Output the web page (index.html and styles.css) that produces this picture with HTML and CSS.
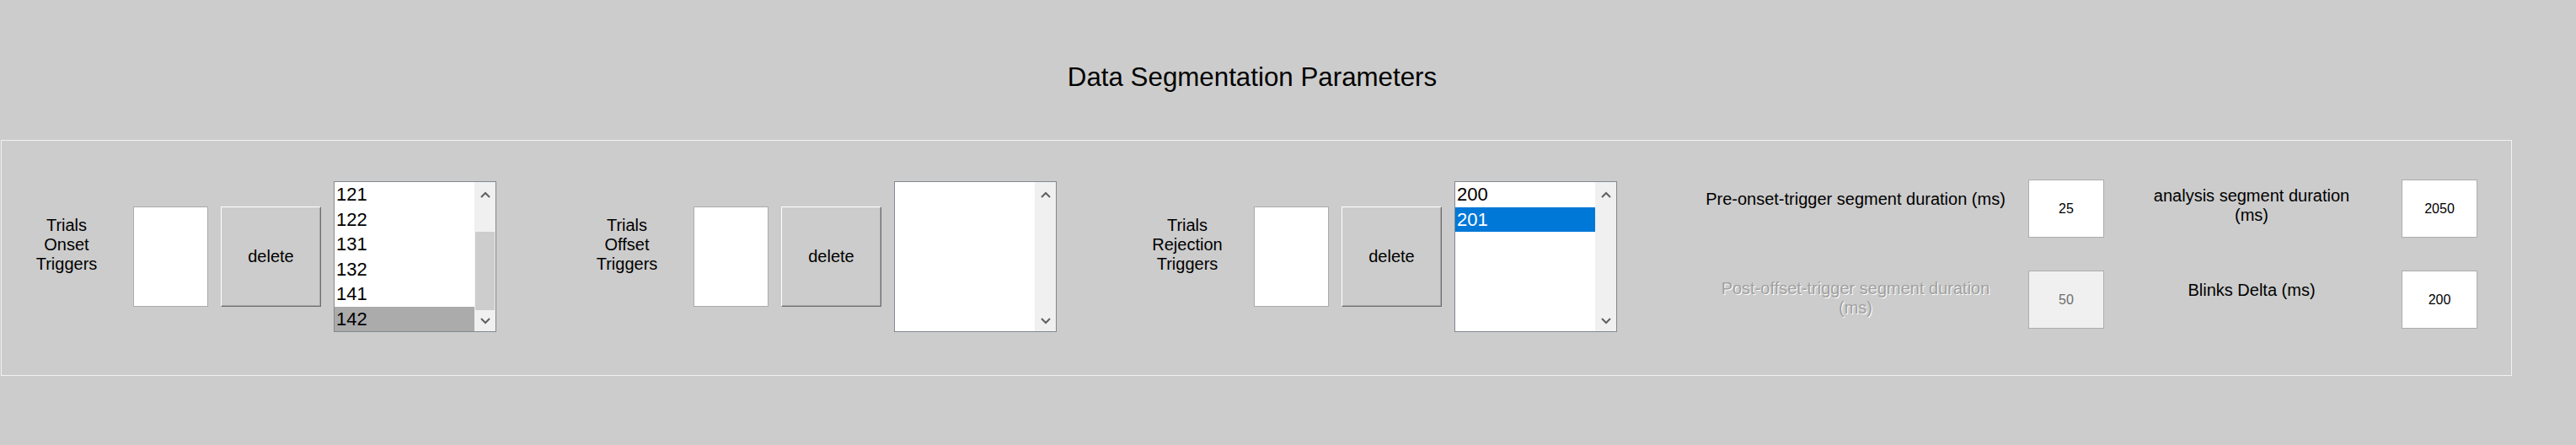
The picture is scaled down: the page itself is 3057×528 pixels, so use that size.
FILE: index.html
```html
<!DOCTYPE html>
<html>
<head>
<meta charset="utf-8">
<title>Data Segmentation Parameters</title>
<link rel="stylesheet" href="styles.css">
</head>
<body>
<div class="window">
  <header class="header">
    <h1 class="title">Data Segmentation Parameters</h1>
  </header>
  <section class="panel">
    <div class="groups">
      <div class="group">
        <div class="group-label">Trials<br>Onset<br>Triggers</div>
        <div class="edit"></div>
        <button class="btn">delete</button>
        <div class="listbox">
          <div class="items">
            <div class="item">121</div>
            <div class="item">122</div>
            <div class="item">131</div>
            <div class="item">132</div>
            <div class="item">141</div>
            <div class="item item-inactive">142</div>
          </div>
          <div class="scrollbar">
            <div class="sb-btn sb-up"><svg width="12" height="8" viewBox="0 0 12 8"><polyline points="1,7 6,2 11,7" fill="none" stroke="#606060" stroke-width="2"/></svg></div>
            <div class="sb-track"><div class="sb-thumb"></div></div>
            <div class="sb-btn sb-down"><svg width="12" height="8" viewBox="0 0 12 8"><polyline points="1,1 6,6 11,1" fill="none" stroke="#606060" stroke-width="2"/></svg></div>
          </div>
        </div>
      </div>

      <div class="group">
        <div class="group-label">Trials<br>Offset<br>Triggers</div>
        <div class="edit"></div>
        <button class="btn">delete</button>
        <div class="listbox">
          <div class="items"></div>
          <div class="scrollbar">
            <div class="sb-btn sb-up"><svg width="12" height="8" viewBox="0 0 12 8"><polyline points="1,7 6,2 11,7" fill="none" stroke="#606060" stroke-width="2"/></svg></div>
            <div class="sb-track"></div>
            <div class="sb-btn sb-down"><svg width="12" height="8" viewBox="0 0 12 8"><polyline points="1,1 6,6 11,1" fill="none" stroke="#606060" stroke-width="2"/></svg></div>
          </div>
        </div>
      </div>

      <div class="group">
        <div class="group-label">Trials<br>Rejection<br>Triggers</div>
        <div class="edit"></div>
        <button class="btn">delete</button>
        <div class="listbox">
          <div class="items">
            <div class="item">200</div>
            <div class="item item-selected">201</div>
          </div>
          <div class="scrollbar">
            <div class="sb-btn sb-up"><svg width="12" height="8" viewBox="0 0 12 8"><polyline points="1,7 6,2 11,7" fill="none" stroke="#606060" stroke-width="2"/></svg></div>
            <div class="sb-track"></div>
            <div class="sb-btn sb-down"><svg width="12" height="8" viewBox="0 0 12 8"><polyline points="1,1 6,6 11,1" fill="none" stroke="#606060" stroke-width="2"/></svg></div>
          </div>
        </div>
      </div>
    </div>

    <div class="params">
      <div class="pcol">
        <div class="field">
          <div class="plabel plabel-a lbl-one">Pre-onset-trigger segment duration (ms)</div>
          <div class="pbox">25</div>
        </div>
        <div class="field">
          <div class="plabel plabel-a lbl-two lbl-disabled">Post-offset-trigger segment duration (ms)</div>
          <div class="pbox pbox-disabled">50</div>
        </div>
      </div>
      <div class="pcol pcol-b">
        <div class="field field-b">
          <div class="plabel plabel-b lbl-two">analysis segment duration (ms)</div>
          <div class="pbox">2050</div>
        </div>
        <div class="field field-b">
          <div class="plabel plabel-b lbl-one">Blinks Delta (ms)</div>
          <div class="pbox">200</div>
        </div>
      </div>
    </div>
  </section>
</div>
</body>
</html>
```

FILE: styles.css
```css
html, body {
  margin: 0;
  padding: 0;
  background: #cccccc;
}

body {
  font-family: "Liberation Sans", Arial, sans-serif;
  color: #000;
  width: 3057px;
  height: 528px;
  overflow: hidden;
}

.window {
  display: flex;
  flex-direction: column;
}

.header {
  width: 2972px;
  padding-top: 74px;
  text-align: center;
}

.title {
  margin: 0;
  font-size: 31.3px;
  line-height: 36px;
  font-weight: normal;
}

.panel {
  box-sizing: border-box;
  margin: 56px 0 0 1px;
  width: 2980px;
  height: 280px;
  border: 1px solid #f2f2f2;
  padding: 46px 0 0 29px;
  display: flex;
  align-items: flex-start;
}

.groups {
  display: flex;
  align-items: flex-start;
  column-gap: 107px;
  padding-top: 2px;
}

.group {
  display: flex;
  align-items: flex-start;
}

.group-label {
  width: 96px;
  margin-top: 41px;
  font-size: 20px;
  line-height: 23px;
  text-align: center;
}

.edit {
  box-sizing: border-box;
  width: 89px;
  height: 119px;
  margin: 30px 0 0 31px;
  background: #fff;
  border: 1px solid #ababab;
}

.btn {
  box-sizing: border-box;
  width: 119px;
  height: 119px;
  margin: 30px 0 0 15px;
  padding: 0;
  background: #cccccc;
  border: 1px solid;
  border-color: #ffffff #6c6c6c #6c6c6c #ffffff;
  box-shadow: inset -1px -1px 0 #a8a8a8;
  font-family: "Liberation Sans", Arial, sans-serif;
  font-size: 20px;
  color: #000;
}

.listbox {
  box-sizing: border-box;
  width: 193px;
  height: 179px;
  margin-left: 15px;
  background: #fff;
  border: 1px solid #828790;
  display: flex;
}

.items {
  flex: 1;
  overflow: hidden;
}

.item {
  height: 29.5px;
  line-height: 29.5px;
  padding-left: 2px;
  font-size: 22px;
  white-space: nowrap;
}

.item-inactive {
  background: #ababab;
}

.item-selected {
  background: #0078d7;
  color: #fff;
}

.scrollbar {
  width: 25px;
  background: #f0f0f0;
  display: flex;
  flex-direction: column;
}

.sb-btn {
  height: 25px;
  display: flex;
  justify-content: center;
  align-items: center;
}

.sb-up {
  padding-top: 4px;
  box-sizing: border-box;
}

.sb-btn svg {
  display: block;
}

.sb-track {
  flex: 1;
  display: flex;
  flex-direction: column;
  justify-content: flex-end;
}

.sb-thumb {
  height: 93px;
  margin: 0 1px;
  background: #cdcdcd;
}

.params {
  display: flex;
  column-gap: 50px;
  margin-left: 104px;
}

.pcol {
  display: flex;
  flex-direction: column;
  row-gap: 39px;
}

.field {
  display: flex;
  align-items: flex-start;
  column-gap: 26px;
}

.field-b {
  column-gap: 53px;
}

.plabel {
  box-sizing: border-box;
  font-size: 20px;
  line-height: 23px;
  text-align: center;
}

.plabel-a {
  width: 358px;
}

.plabel-b {
  width: 250px;
}

.lbl-one {
  padding-top: 12px;
}

.lbl-two {
  padding-top: 8px;
}

.lbl-disabled {
  padding-top: 9.5px;
  color: #a0a0a0;
  text-shadow: 1px 1px 0 #ffffff;
}

.pbox {
  box-sizing: border-box;
  width: 90px;
  height: 69px;
  background: #fff;
  border: 1px solid #adadad;
  display: flex;
  justify-content: center;
  align-items: center;
  font-size: 16px;
}

.pbox-disabled {
  background: #f0f0f0;
  color: #6d6d6d;
}
```
